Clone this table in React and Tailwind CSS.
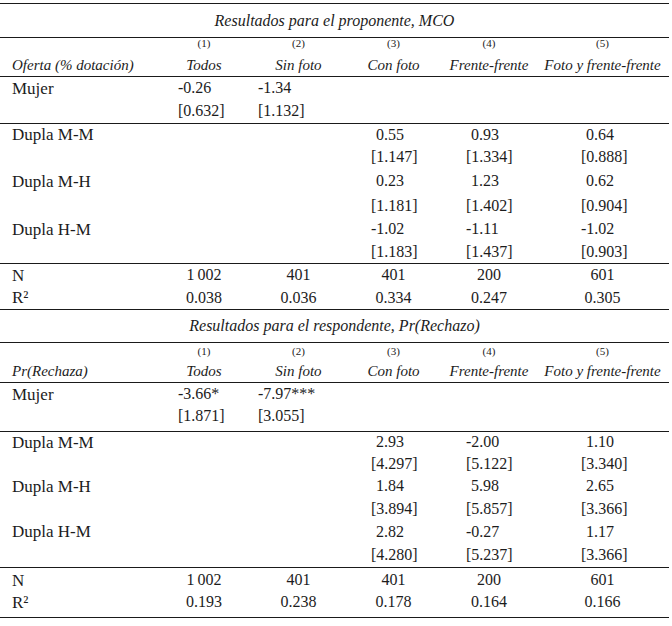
import React from "react"

const grid = "grid grid-cols-[157px_94px_95px_95px_96px_131px]"
const pads = ["pl-[21px]", "pl-[7px]", "pl-[25px]", "pl-[25px]", "pl-[44px]"]

function Row({ h, label, cells = [], center }) {
  return (
    <div className={`${grid} ${h}`}>
      <div className="flex items-center pl-[12px] text-[17px]">{label}</div>
      {[0, 1, 2, 3, 4].map((i) => {
        const v = cells[i] || ""
        const hang = v.startsWith("-") || v.startsWith("[")
        if (center) {
          return (
            <div key={i} className="flex items-center justify-center text-[16px]">{v}</div>
          )
        }
        return (
          <div key={i} className={`flex items-center text-[16px] ${pads[i]}`}>
            <span className={hang || i < 2 ? "" : "ml-[5px]"}>{v}</span>
          </div>
        )
      })}
    </div>
  )
}

function Header({ dep, top, gap }) {
  const heads = ["Todos", "Sin foto", "Con foto", "Frente-frente", "Foto y frente-frente"]
  return (
    <div className="border-t border-[#1a1a1a]">
      <div className={`${grid} ${top} text-[11px]`}>
        <div />
        {heads.map((_, i) => (
          <div key={i} className="flex items-center justify-center">({i + 1})</div>
        ))}
      </div>
      <div className={gap} />
      <div className={`${grid} h-[22px] italic text-[15px]`}>
        <div className="flex items-center pl-[12px] whitespace-nowrap">{dep}</div>
        {heads.map((t) => (
          <div key={t} className="flex items-center justify-center whitespace-nowrap">{t}</div>
        ))}
      </div>
    </div>
  )
}

export default function App() {
  return (
    <div
      className="w-[672px] h-[626px] bg-white pt-[3px] text-[#1c1c1c] leading-none"
      style={{ fontFamily: '"Liberation Serif", "Times New Roman", serif' }}
    >
      <div className="w-[669px]">
        {/* proponente */}
        <div className="border-t border-[#1a1a1a] h-[34px] flex items-center justify-center italic text-[16px]">
          Resultados para el proponente, MCO
        </div>
        <Header dep="Oferta (% dotación)" top="h-[10px]" gap="h-[6px]" />
        <div className="border-t border-[#1a1a1a]">
          <Row h="h-[22px]" label="Mujer" cells={["-0.26", "-1.34"]} />
          <Row h="h-[24px]" cells={["[0.632]", "[1.132]"]} />
        </div>
        <div className="border-t border-[#1a1a1a]">
          <Row h="h-[21px]" label="Dupla M-M" cells={["", "", "0.55", "0.93", "0.64"]} />
          <Row h="h-[23px]" cells={["", "", "[1.147]", "[1.334]", "[0.888]"]} />
          <Row h="h-[26px]" label="Dupla M-H" cells={["", "", "0.23", "1.23", "0.62"]} />
          <Row h="h-[24px]" cells={["", "", "[1.181]", "[1.402]", "[0.904]"]} />
          <Row h="h-[22px]" label="Dupla H-M" cells={["", "", "-1.02", "-1.11", "-1.02"]} />
          <Row h="h-[23px]" cells={["", "", "[1.183]", "[1.437]", "[0.903]"]} />
        </div>
        <div className="border-t border-[#1a1a1a]">
          <Row h="h-[22px]" label="N" center cells={["1\u2009002", "401", "401", "200", "601"]} />
          <Row h="h-[23px]" label="R²" center cells={["0.038", "0.036", "0.334", "0.247", "0.305"]} />
        </div>

        {/* respondente */}
        <div className="border-t border-[#1a1a1a] h-[33px] flex items-center justify-center italic text-[16px]">
          Resultados para el respondente, Pr(Rechazo)
        </div>
        <Header dep="Pr(Rechaza)" top="h-[17px]" gap="h-0" />
        <div className="border-t border-[#1a1a1a] pb-[4px]">
          <Row h="h-[22px]" label="Mujer" cells={["-3.66*", "-7.97***"]} />
          <Row h="h-[22px]" cells={["[1.871]", "[3.055]"]} />
        </div>
        <div className="border-t border-[#1a1a1a]">
          <Row h="h-[20px]" label="Dupla M-M" cells={["", "", "2.93", "-2.00", "1.10"]} />
          <Row h="h-[23px]" cells={["", "", "[4.297]", "[5.122]", "[3.340]"]} />
          <Row h="h-[22px]" label="Dupla M-H" cells={["", "", "1.84", "5.98", "2.65"]} />
          <Row h="h-[23px]" cells={["", "", "[3.894]", "[5.857]", "[3.366]"]} />
          <Row h="h-[23px]" label="Dupla H-M" cells={["", "", "2.82", "-0.27", "1.17"]} />
          <Row h="h-[24px]" cells={["", "", "[4.280]", "[5.237]", "[3.366]"]} />
        </div>
        <div className="border-t border-[#1a1a1a] pb-[5px]">
          <Row h="h-[24px]" label="N" center cells={["1\u2009002", "401", "401", "200", "601"]} />
          <Row h="h-[20px]" label="R²" center cells={["0.193", "0.238", "0.178", "0.164", "0.166"]} />
        </div>
        <div className="border-t border-[#1a1a1a]" />
      </div>
    </div>
  )
}
